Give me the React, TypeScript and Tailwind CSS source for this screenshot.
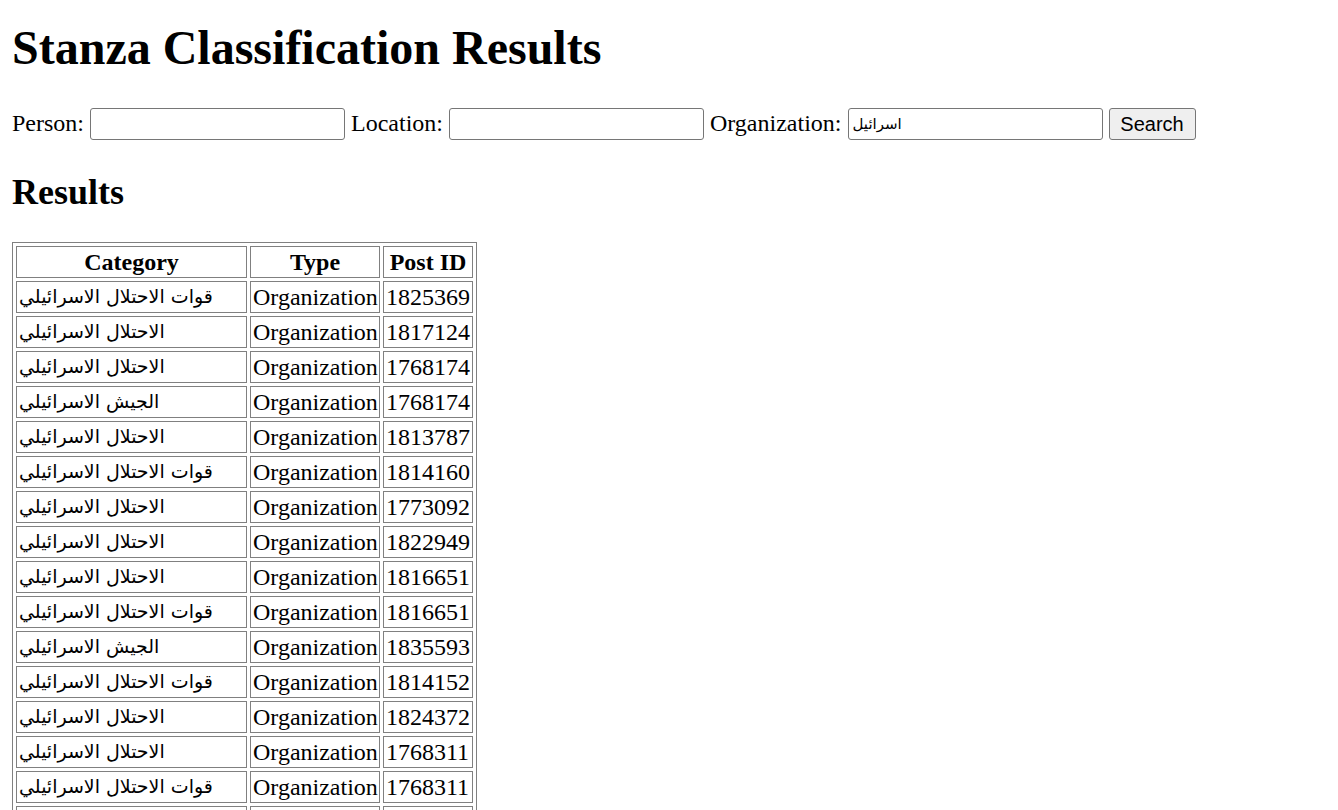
import React from "react";

const rows: [string, string][] = [
  ["قوات الاحتلال الاسرائيلي", "1825369"],
  ["الاحتلال الاسرائيلي", "1817124"],
  ["الاحتلال الاسرائيلي", "1768174"],
  ["الجيش الاسرائيلي", "1768174"],
  ["الاحتلال الاسرائيلي", "1813787"],
  ["قوات الاحتلال الاسرائيلي", "1814160"],
  ["الاحتلال الاسرائيلي", "1773092"],
  ["الاحتلال الاسرائيلي", "1822949"],
  ["الاحتلال الاسرائيلي", "1816651"],
  ["قوات الاحتلال الاسرائيلي", "1816651"],
  ["الجيش الاسرائيلي", "1835593"],
  ["قوات الاحتلال الاسرائيلي", "1814152"],
  ["الاحتلال الاسرائيلي", "1824372"],
  ["الاحتلال الاسرائيلي", "1768311"],
  ["قوات الاحتلال الاسرائيلي", "1768311"],
  ["الاحتلال الاسرائيلي", "1813010"],
  ["الجيش الاسرائيلي", "1813010"],
];

export default function App() {
  return (
    <div className="bg-white text-black px-3 pt-[20px] pb-6 font-['Liberation_Serif','Times_New_Roman','DejaVu_Serif',serif] text-[24px]">
      <h1 className="m-0 text-[48px] font-bold leading-[55px]">Stanza Classification Results</h1>
      <div className="mt-[33px] flex items-center gap-[6px] h-[32px]">
        <span className="leading-[28px] -mt-[2px]">Person:</span>
        <input
          type="text"
          className="h-[32px] w-[255px] rounded-[3px] border border-[#767676] bg-white px-[3px] font-['Liberation_Sans','DejaVu_Sans',sans-serif] text-[20px]"
        />
        <span className="leading-[28px] -mt-[2px]">Location:</span>
        <input
          type="text"
          className="h-[32px] w-[255px] rounded-[3px] border border-[#767676] bg-white px-[3px] font-['Liberation_Sans','DejaVu_Sans',sans-serif] text-[20px]"
        />
        <span className="leading-[28px] -mt-[2px]">Organization:</span>
        <input
          type="text"
          defaultValue="اسرائيل"
          className="h-[32px] w-[255px] rounded-[3px] border border-[#767676] bg-white px-[4px] font-['DejaVu_Sans',sans-serif] text-[15px] text-black"
        />
        <button className="h-[32px] w-[87px] rounded-[3px] border border-[#767676] bg-[#efefef] font-['Liberation_Sans','DejaVu_Sans',sans-serif] text-[20px] leading-none">
          Search
        </button>
      </div>
      <h2 className="m-0 mt-[32px] text-[36px] font-bold leading-[41px]">Results</h2>
      <table className="mt-[29px] table-fixed w-[465px] border border-[#808080] border-separate border-spacing-[3px]">
        <thead>
          <tr>
            <th className="w-[231px] h-[32px] border border-[#808080] p-0 px-[2px] text-center font-bold leading-[28px]">Category</th>
            <th className="w-[130px] h-[32px] border border-[#808080] p-0 px-[2px] text-center font-bold leading-[28px]">Type</th>
            <th className="w-[90px] h-[32px] border border-[#808080] p-0 px-[2px] text-center font-bold leading-[28px]">Post ID</th>
          </tr>
        </thead>
        <tbody>
          {rows.map(([cat, id], i) => (
            <tr key={i}>
              <td className="h-[32px] border border-[#808080] p-0 px-[2px] text-left leading-[28px] whitespace-nowrap overflow-hidden">
                <span dir="rtl" className="inline-block align-top text-[19px] leading-[26px] font-['DejaVu_Sans',sans-serif]">{cat}</span>
              </td>
              <td className="h-[32px] border border-[#808080] p-0 px-[2px] text-left leading-[28px]">Organization</td>
              <td className="h-[32px] border border-[#808080] p-0 px-[2px] text-left leading-[28px]">{id}</td>
            </tr>
          ))}
        </tbody>
      </table>
    </div>
  );
}
